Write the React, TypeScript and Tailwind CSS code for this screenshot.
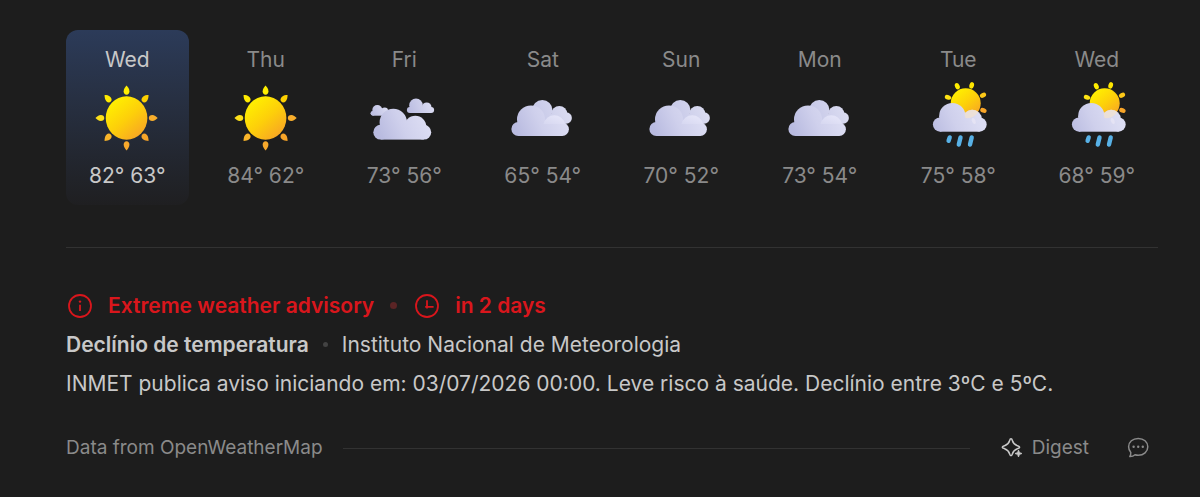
import React from 'react';

type Condition = 'sun' | 'scattered' | 'clouds' | 'rain';

const forecast: { day: string; condition: Condition; high: number; low: number; active?: boolean }[] = [
  { day: 'Wed', condition: 'sun', high: 82, low: 63, active: true },
  { day: 'Thu', condition: 'sun', high: 84, low: 62 },
  { day: 'Fri', condition: 'scattered', high: 73, low: 56 },
  { day: 'Sat', condition: 'clouds', high: 65, low: 54 },
  { day: 'Sun', condition: 'clouds', high: 70, low: 52 },
  { day: 'Mon', condition: 'clouds', high: 73, low: 54 },
  { day: 'Tue', condition: 'rain', high: 75, low: 58 },
  { day: 'Wed', condition: 'rain', high: 68, low: 59 },
];

const sunRays = [
  { angle: 0, color: '#ffee00' },
  { angle: 45, color: '#fdd000' },
  { angle: 90, color: '#f8ae2c' },
  { angle: 135, color: '#f7a428' },
  { angle: 180, color: '#f8a92c' },
  { angle: 225, color: '#fab52a' },
  { angle: 270, color: '#fde01a' },
  { angle: 315, color: '#ffea00' },
];

const SunIcon = () => (
  <g transform="translate(1 0) scale(0.96 1)">
    <circle cx="36" cy="36" r="21.7" fill="url(#sunFill)" />
    {sunRays.map((ray) => (
      <path
        key={ray.angle}
        d="M36 3.6C37.4 5 39 7 39 9.2C39 11.4 37.8 12.8 36 12.8C34.2 12.8 33 11.4 33 9.2C33 7 34.6 5 36 3.6Z"
        fill={ray.color}
        transform={`rotate(${ray.angle} 36 36)`}
      />
    ))}
  </g>
);

const ScatteredIcon = () => (
  <>
    <g fill="url(#cloudSmallLeft)">
      <circle cx="9.3" cy="28" r="5" />
      <circle cx="4.9" cy="31.3" r="2.4" />
      <circle cx="16.7" cy="29" r="3.4" />
      <rect x="4.5" y="29" width="14" height="4.7" />
    </g>
    <g fill="url(#cloudSmallRight)">
      <circle cx="48" cy="23.4" r="6.8" />
      <circle cx="41.9" cy="28" r="3" />
      <circle cx="58.7" cy="25.2" r="4.8" />
      <circle cx="63.1" cy="28" r="3" />
      <rect x="42" y="25.5" width="21" height="5.5" />
    </g>
    <g fill="url(#cloudFill)">
      <circle cx="25.3" cy="40.4" r="13.7" />
      <circle cx="12.7" cy="50.2" r="7.4" />
      <circle cx="47.3" cy="44.8" r="11" />
      <circle cx="55.8" cy="50.2" r="7.4" />
      <rect x="12.7" y="45" width="43.1" height="12.6" />
    </g>
  </>
);

const CloudsIcon = () => (
  <>
    <g fill="url(#cloudBack)">
      <circle cx="35.3" cy="28.2" r="10.2" />
      <circle cx="52.3" cy="32" r="8" />
      <circle cx="59.2" cy="36" r="5.7" />
      <rect x="32" y="32" width="27" height="9.7" />
    </g>
    <g fill="url(#cloudFill)">
      <circle cx="24" cy="37.4" r="14" />
      <circle cx="11.4" cy="47" r="7" />
      <circle cx="55.2" cy="47.3" r="6.7" />
      <rect x="11.4" y="41.7" width="43.8" height="12.3" />
    </g>
    <path d="M36.5 42A11 11 0 0 1 58 42Z" fill="url(#cloudShine)" />
  </>
);

const RainIcon = () => (
  <>
    <circle cx="43.7" cy="21.3" r="15" fill="url(#sunFill)" />
    <ellipse cx="35.3" cy="4.2" rx="2.3" ry="3.3" fill="#ffee00" transform="rotate(-25 35.3 4.2)" />
    <ellipse cx="49.7" cy="3.4" rx="2.3" ry="3.3" fill="#ffe600" transform="rotate(15 49.7 3.4)" />
    <ellipse cx="61" cy="13.3" rx="2.3" ry="3.3" fill="#fcc818" transform="rotate(62 61 13.3)" />
    <ellipse cx="61.4" cy="28.4" rx="2.3" ry="3.3" fill="#f8a528" transform="rotate(112 61.4 28.4)" />
    <ellipse cx="26" cy="15.3" rx="2.3" ry="3.3" fill="#ffe414" transform="rotate(-70 26 15.3)" />
    <g fill="url(#cloudFill)">
      <circle cx="30.3" cy="34.2" r="13.2" />
      <circle cx="18" cy="42.6" r="7.1" />
      <circle cx="57.6" cy="42.6" r="7.1" />
      <circle cx="50.3" cy="37.4" r="9.6" />
      <rect x="18" y="38" width="39.6" height="11.7" />
    </g>
    {/* sun showing through the thin edge of the cloud */}
    <path
      d="M42.6 31.6A9.6 9.6 0 0 1 56.3 29.9A15 15 0 0 1 43.5 36.3Z"
      fill="#f3e3cc"
      fillOpacity="0.7"
    />
    <ellipse cx="51.7" cy="39" rx="1.8" ry="3.2" fill="#eceaf6" fillOpacity="0.6" transform="rotate(-20 51.7 39)" />
    <g stroke="#58b1e6" strokeWidth="4.4" strokeLinecap="round">
      <path d="M27.7 55.4L26.6 58.8" />
      <path d="M38.5 55.4L36.8 62.6" />
      <path d="M49.7 55.4L48 62.6" />
    </g>
  </>
);

const icons: Record<Condition, React.FC> = {
  sun: SunIcon,
  scattered: ScatteredIcon,
  clouds: CloudsIcon,
  rain: RainIcon,
};

// Shared gradients for the weather icons
const IconDefs = () => (
  <svg className="absolute h-0 w-0" aria-hidden="true">
    <defs>
      <linearGradient id="sunFill" x1="0.15" y1="0.1" x2="0.85" y2="0.95">
        <stop offset="0" stopColor="#fff000" />
        <stop offset="0.5" stopColor="#fdcf0a" />
        <stop offset="1" stopColor="#f7a326" />
      </linearGradient>
      <linearGradient id="cloudFill" gradientUnits="userSpaceOnUse" x1="12" y1="54" x2="56" y2="34">
        <stop offset="0" stopColor="#b9bbe0" />
        <stop offset="0.5" stopColor="#cfd0ec" />
        <stop offset="1" stopColor="#dcddf3" />
      </linearGradient>
      <linearGradient id="cloudBack" gradientUnits="userSpaceOnUse" x1="26" y1="40" x2="64" y2="26">
        <stop offset="0" stopColor="#c3c5e6" />
        <stop offset="1" stopColor="#dddef2" />
      </linearGradient>
      <linearGradient id="cloudShine" x1="0" y1="1" x2="1" y2="0">
        <stop offset="0" stopColor="#d6d7f0" />
        <stop offset="1" stopColor="#e8e8fa" />
      </linearGradient>
      <linearGradient id="cloudSmallLeft" gradientUnits="userSpaceOnUse" x1="3" y1="34" x2="20" y2="26">
        <stop offset="0" stopColor="#b9bbe0" />
        <stop offset="1" stopColor="#dcddf3" />
      </linearGradient>
      <linearGradient id="cloudSmallRight" gradientUnits="userSpaceOnUse" x1="40" y1="31" x2="65" y2="22">
        <stop offset="0" stopColor="#b9bbe0" />
        <stop offset="1" stopColor="#dcddf3" />
      </linearGradient>
    </defs>
  </svg>
);

const InfoIcon = () => (
  <svg className="size-7 shrink-0" viewBox="0 0 28 28" fill="none" stroke="currentColor" strokeWidth="1.8">
    <circle cx="14" cy="14" r="11" />
    <path d="M14 12.8V19" />
    <circle cx="14" cy="9.6" r="1.2" fill="currentColor" stroke="none" />
  </svg>
);

const ClockIcon = () => (
  <svg className="size-7 shrink-0" viewBox="0 0 28 28" fill="none" stroke="currentColor" strokeWidth="1.8">
    <circle cx="14" cy="14" r="11" />
    <path d="M14 8.3V16.6M12.2 14.8H20.6" />
  </svg>
);

const SparkleIcon = () => (
  <svg className="size-6 text-[#c8c8c8]" viewBox="0 0 24 24" fill="none" stroke="currentColor">
    <path
      d="M11 2.8C11.8 2.8 12.1 3.5 12.4 4.6C13.2 7.5 14.2 8.6 17.4 9.7C18.6 10.1 19.6 10.4 19.6 11.2C19.6 12 18.6 12.3 17.4 12.7C14.2 13.8 13.2 15 12.4 17.9C12.1 19 11.8 19.8 11 19.8C10.2 19.8 9.9 19 9.6 17.9C8.8 15 7.8 13.8 4.6 12.7C3.4 12.3 2.3 12 2.3 11.2C2.3 10.4 3.4 10.1 4.6 9.7C7.8 8.6 8.8 7.5 9.6 4.6C9.9 3.5 10.2 2.8 11 2.8Z"
      strokeWidth="1.6"
      strokeLinejoin="round"
    />
    <path
      d="M18.5 14C19.1 16.2 19.6 16.7 22 17.5C19.6 18.3 19.1 18.8 18.5 21C17.9 18.8 17.4 18.3 15 17.5C17.4 16.7 17.9 16.2 18.5 14Z"
      fill="currentColor"
      strokeWidth="0.8"
    />
  </svg>
);

const ChatIcon = () => (
  <svg className="size-6" viewBox="0 0 24 24" fill="none" stroke="currentColor">
    <path
      d="M12.2 2.4C6.7 2.4 2.6 6 2.6 10.8C2.6 13 3.4 14.9 4.8 16.4C4.9 17.9 4.6 19.3 3.8 20.6C6 20.7 7.7 20 9 18.8C10 19.1 11.1 19.3 12.2 19.3C17.7 19.3 21.8 15.7 21.8 10.8C21.8 6 17.7 2.4 12.2 2.4Z"
      strokeWidth="1.5"
      strokeLinejoin="round"
    />
    <g fill="currentColor" stroke="none">
      <circle cx="7.6" cy="10.8" r="1.2" />
      <circle cx="12.2" cy="10.8" r="1.2" />
      <circle cx="16.8" cy="10.8" r="1.2" />
    </g>
  </svg>
);

export default function App() {
  return (
    <main className="min-h-screen bg-[#1d1d1d] pt-[30px] pr-[42px] pb-6 pl-[66px] font-['Inter',sans-serif] text-[21px] text-[#c8c8c8]">
      <IconDefs />

      <ul className="grid grid-cols-8 gap-4">
        {forecast.map((item, i) => {
          const Icon = icons[item.condition];
          return (
            <li
              key={i}
              className={
                item.active
                  ? 'flex flex-col items-center rounded-xl bg-linear-to-b from-[#2c3b59] to-[#1f1f21] pt-3.5 pb-[13px]'
                  : 'flex flex-col items-center pt-3.5 pb-[13px] text-[#8a8a8a]'
              }
            >
              <span className="leading-8">{item.day}</span>
              <svg className="my-1.5 size-[72px]" viewBox="0 0 72 72" fill="none" aria-hidden="true">
                <Icon />
              </svg>
              <span className="leading-8 whitespace-nowrap">
                {item.high}° {item.low}°
              </span>
            </li>
          );
        })}
      </ul>

      <section className="mt-[42px] border-t border-[#323232] pt-[38px] leading-[39px]">
        <h2 className="flex items-center font-semibold text-[#d9161c]">
          <InfoIcon />
          <span className="ml-3.5">Extreme weather advisory</span>
          <span className="mx-4 size-[7px] rounded-full bg-[#5a2425]" />
          <ClockIcon />
          <span className="ml-3.5">in 2 days</span>
        </h2>
        <div className="flex items-center">
          <h3 className="font-semibold">Declínio de temperatura</h3>
          <span className="mx-3.5 size-[5px] rounded-full bg-[#434343]" />
          <span>Instituto Nacional de Meteorologia</span>
        </div>
        <p>INMET publica aviso iniciando em: 03/07/2026 00:00. Leve risco à saúde. Declínio entre 3ºC e 5ºC.</p>
      </section>

      <footer className="mt-[30px] flex items-center text-[19px] leading-[30px] text-[#8a8a8a]">
        <a href="#openweathermap">Data from OpenWeatherMap</a>
        <span className="mr-[30px] ml-5 h-px flex-1 bg-[#323232]" />
        <button type="button" className="flex items-center gap-2">
          <SparkleIcon />
          Digest
        </button>
        <button type="button" className="mr-2 ml-[37px]" aria-label="Comments">
          <ChatIcon />
        </button>
      </footer>
    </main>
  );
}
